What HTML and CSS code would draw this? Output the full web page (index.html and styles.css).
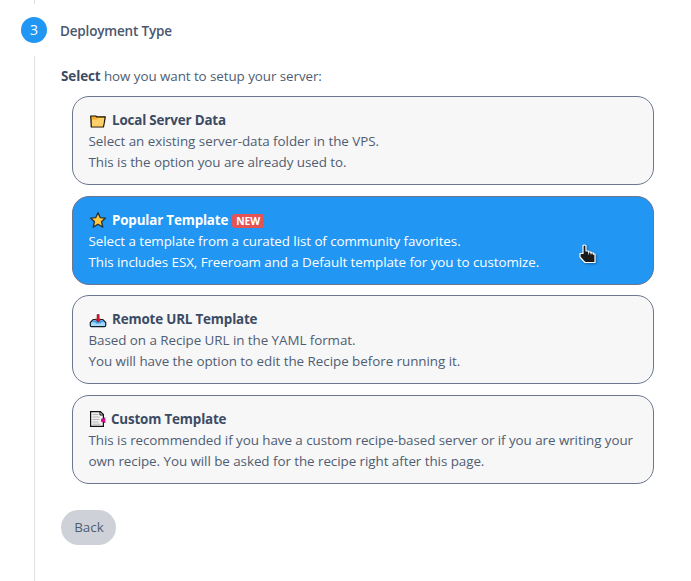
FILE: index.html
```
<!DOCTYPE html>
<html lang="en">
<head>
<meta charset="utf-8">
<title>Deployment Type</title>
<link rel="stylesheet" href="styles.css">
</head>
<body>
<main class="stepper">
  <div class="rail">
    <span class="rail-line rail-top"></span>
    <span class="step-number">3</span>
    <span class="rail-line rail-rest"></span>
  </div>
  <section class="step">
    <h1 class="step-title">Deployment Type</h1>
    <p class="intro"><b>Select</b> how you want to setup your server:</p>
    <div class="options">
      <article class="option">
        <h2 class="name"><svg class="icon" viewBox="0 0 18 18"><path d="M1.700 4h5l1 .8h8.600L14.500 15H2.300z" fill="#f3ad27" stroke="#17130b" stroke-width="1.2" stroke-linejoin="round"/><path d="M3 14.300V7.500h4.500l1.500-1.600h6.200l-1.300 8.400z" fill="#ffd16b"/></svg><span>Local Server Data</span></h2>
        <p class="snug">Select an existing server-data folder in the VPS.</p>
        <p>This is the option you are already used to.</p>
      </article>
      <article class="option selected">
        <h2 class="name"><svg class="icon" viewBox="0 0 18 18"><path d="M9 1.700l2.200 4.900 5.300.5-4 3.600 1.300 5.400L9 13.200l-4.800 2.900 1.300-5.400-4-3.600 5.300-.5z" fill="#ffc83d" stroke="#24313a" stroke-width="1.3" stroke-linejoin="round"/></svg><span>Popular Template</span><span class="badge">NEW</span></h2>
        <p class="tight">Select a template from a curated list of community favorites.</p>
        <p class="tight">This includes ESX, Freeroam and a Default template for you to customize.</p>
        <svg class="pointer" viewBox="0 0 18 21"><path d="M4 2q0-1 1.500-1T7 2v5h2.500v1H12v1h2.500v1H16v8.500H6L4.500 17 1 13V9.500h3z" fill="#1b1b1b" stroke="#fff" stroke-width="1.2" stroke-linejoin="round"/><path d="M9.500 7.500v3M12 8.500v2M14.300 9.500v1.500" stroke="#fff" stroke-width=".7"/></svg>
      </article>
      <article class="option">
        <h2 class="name"><svg class="icon" viewBox="0 0 18 18"><path d="M4.200 8.500h9.600l2.900 3v3q0 1.200-1.200 1.200h-13q-1.200 0-1.200-1.200v-3z" fill="#a5daff" stroke="#111d28" stroke-width="1.200"/><path d="M4.500 9.200h9l1.800 2h-3l-1 1.300H7l-1-1.300H3z" fill="#479be3"/><path d="M8 3.500h2.200V8H12l-2.900 3.300L6.200 8H8z" fill="#d91428" stroke="#641923" stroke-width=".5"/></svg><span>Remote URL Template</span></h2>
        <p>Based on a Recipe URL in the YAML format.</p>
        <p class="snug">You will have the option to edit the Recipe before running it.</p>
      </article>
      <article class="option">
        <h2 class="name compact"><svg class="icon" viewBox="0 0 18 18"><path d="M1.600 1.600h9.800l3 3v11.800H1.600z" fill="#f1f1f1" stroke="#111" stroke-width="1.200"/><path d="M11 1.800v3.200h3" fill="none" stroke="#111"/><path d="M3.500 4.500h6M3.500 7h7M3.500 9.500h7M3.500 12h6M3.500 14.200h8" stroke="#b7b7b7"/><path d="M15.800 7.500v5.500" stroke="#222" stroke-width="1"/><rect x="12" y="8.200" width="4" height="4" rx="1.500" fill="#e3008c"/></svg><span>Custom Template</span></h2>
        <p>This is recommended if you have a custom recipe-based server or if you are writing your</p>
        <p>own recipe. You will be asked for the recipe right after this page.</p>
      </article>
    </div>
    <button class="back" type="button">Back</button>
  </section>
</main>
</body>
</html>
```
FILE: styles.css
```
* { box-sizing: border-box; }
body {
  margin: 0;
  background: #fff;
  color: #4f5d73;
  font: 13.4px/21px "Open Sans", "Noto Sans", sans-serif;
  letter-spacing: -.055px;
  overflow: hidden;
}
h1, h2, p { margin: 0; white-space: nowrap; }
.snug { letter-spacing: -.035px; }
.tight { letter-spacing: -.07px; }
.stepper { display: flex; height: 581px; }
.rail { width: 26px; margin-left: 21px; display: flex; flex-direction: column; align-items: center; }
.rail-line { width: 1px; background: #dfdfdf; }
.rail-top { height: 4px; }
.rail-rest { flex: 1; margin-top: 13px; }
.step-number {
  width: 26px; height: 26px; margin-top: 13px;
  border-radius: 50%; background: #2196f3; color: #fff;
  text-align: center; line-height: 26px; font-size: 14px;
}
.step { margin-left: 14px; padding-top: 21px; }
.step-title { font-size: 13.5px; font-weight: 600; color: #4a566e; margin-left: -1px; letter-spacing: -.17px; }
.intro { margin-top: 24px; letter-spacing: -.07px; }
.intro b { color: #3c4b64; }
.options { margin: 9px 0 0 11px; display: grid; gap: 10.6px; width: 582px; }
.option {
  position: relative; height: 89px; padding: 13px 15.5px 0;
  border: 1px solid #6b7690; border-radius: 17px; background: #f7f7f7;
}
.option.selected { background: #2196f3; color: #fff; }
.name { display: flex; align-items: center; height: 21px; font-size: 13.4px; font-weight: 700; color: #3c4b64; letter-spacing: -.17px; }
.selected .name { color: #fff; }
.icon { width: 18px; height: 18px; margin-right: 5.5px; }
.compact .icon { margin-right: 4.5px; }
.badge {
  margin: 1px 0 0 4px; width: 32px; height: 14px; border-radius: 3px;
  background: #e55353; color: #fff; font-size: 10.3px; line-height: 14px; text-align: center; letter-spacing: 0;
}
.pointer { position: absolute; left: 506px; top: 47px; width: 18px; height: 21px; filter: drop-shadow(1px 1px 1px #0005); }
.back {
  display: block; margin-top: 26px; width: 55px; height: 35px; padding: 0 0 0 1px;
  border: 0; border-radius: 18px; background: #ced2d8; color: #4f5d73; font: inherit;
}
```
